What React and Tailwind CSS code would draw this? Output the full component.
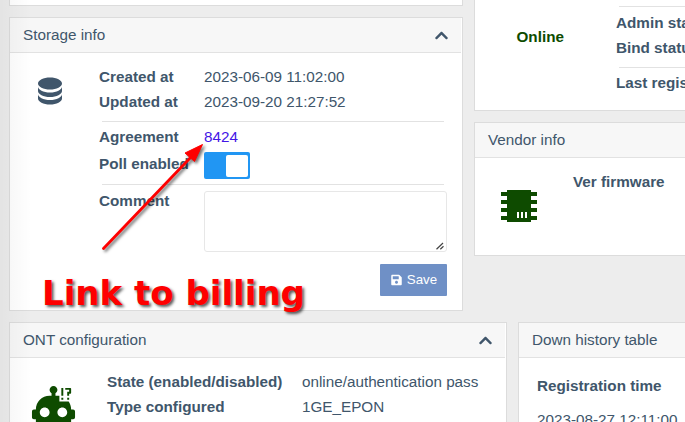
import React from "react";
import { FaChevronUp, FaSave } from "react-icons/fa";

function MdIcon({ d, className }) {
  return (
    <svg viewBox="0 0 24 24" className={className} fill="currentColor">
      <path d={d} />
    </svg>
  );
}

const DATABASE =
  "M12,3C7.58,3 4,4.79 4,7C4,9.21 7.58,11 12,11C16.42,11 20,9.21 20,7C20,4.79 16.42,3 12,3M4,9V12C4,14.21 7.58,16 12,16C16.42,16 20,14.21 20,12V9C20,11.21 16.42,13 12,13C7.58,13 4,11.21 4,9M4,14V17C4,19.21 7.58,21 12,21C16.42,21 20,19.21 20,17V14C20,16.21 16.42,18 12,18C7.58,18 4,16.21 4,14Z";
const CHIP =
  "M6,4H18V5H21V7H18V9H21V11H18V13H21V15H18V17H21V19H18V20H6V19H3V17H6V15H3V13H6V11H3V9H6V7H3V5H6V4M11,15V18H12V15H11M13,15V18H14V15H13M15,15V18H16V15H15Z";
const ROBOT =
  "M20 4H18V3H20.5C20.78 3 21 3.22 21 3.5V5.5C21 5.78 20.78 6 20.5 6H20V7H19V5H20V4M19 9H20V8H19V9M17 3H16V7H17V3M23 15V18C23 18.55 22.55 19 22 19H21V20C21 21.11 20.11 22 19 22H5C3.9 22 3 21.11 3 20V19H2C1.45 19 1 18.55 1 18V15C1 14.45 1.45 14 2 14H3C3 10.13 6.13 7 10 7H11V5.73C10.4 5.39 10 4.74 10 4C10 2.9 10.9 2 12 2S14 2.9 14 4C14 4.74 13.6 5.39 13 5.73V7H14C14.34 7 14.67 7.03 15 7.08V10H19.74C20.53 11.13 21 12.5 21 14H22C22.55 14 23 14.45 23 15M10 15.5C10 14.12 8.88 13 7.5 13S5 14.12 5 15.5 6.12 18 7.5 18 10 16.88 10 15.5M19 15.5C19 14.12 17.88 13 16.5 13S14 14.12 14 15.5 15.12 18 16.5 18 19 16.88 19 15.5M17 8H16V9H17V8Z";

function Card({ title, collapsible, className, children }) {
  return (
    <section className={"shrink-0 border border-[#dcdcdc] bg-white " + className}>
      {title && (
        <header className="mr-px flex h-[35px] items-center justify-between border-b border-[#e2e2e2] bg-[#f7f7f7] pl-[13px] pr-[13px]">
          <h2>{title}</h2>
          {collapsible && <FaChevronUp className="h-[15px] w-[13px]" />}
        </header>
      )}
      {children}
    </section>
  );
}

function Row({ label, value }) {
  return (
    <div className="flex h-[25px] leading-[25px]">
      <div className="w-[105px] shrink-0 font-bold">{label}</div>
      <div>{value}</div>
    </div>
  );
}

export default function App() {
  return (
    <div className="relative flex h-[422px] w-[685px] flex-col overflow-hidden bg-[#ededed] pl-[9px] font-['Liberation_Sans',Arial,sans-serif] text-[15.25px] text-[#40566b]">
      <div className="flex h-[322px] shrink-0 gap-[11px]">
        <div className="flex w-[454px] shrink-0 flex-col gap-[11px]">
          <Card className="h-[6px] border-t-0" />
          <Card title="Storage info" collapsible className="h-[294px]">
            <div className="flex">
              <div className="w-[89px] shrink-0 pl-[22px] pt-[20px]">
                <MdIcon d={DATABASE} className="h-9 w-9" />
              </div>
              <div className="w-[348px] pt-[11px]">
                <Row label="Created at" value="2023-06-09 11:02:00" />
                <Row label="Updated at" value="2023-09-20 21:27:52" />
                <div className="ml-[3px] mr-[3px] mt-[7px] mb-[2px] h-px bg-[#e2e2e2]" />
                <Row label="Agreement" value={<a className="text-[#4316e6]">8424</a>} />
                <div className="mt-[3px] flex h-[27px] leading-[24px]">
                  <div className="w-[105px] shrink-0 font-bold">Poll enabled</div>
                  <div className="flex h-[27px] w-[46px] items-center justify-end rounded-[2px] bg-[#2196f3] pr-[2px]">
                    <div className="h-[22px] w-[22px] rounded-[2px] bg-white" />
                  </div>
                </div>
                <div className="ml-[3px] mr-[3px] mt-[5px] h-px bg-[#e2e2e2]" />
                <div className="flex pt-[3px]">
                  <div className="w-[105px] shrink-0 font-bold leading-[25px]">Comment</div>
                  <div className="mt-[3px] flex h-[61px] w-[243px] shrink-0 items-end justify-end rounded-[3px] border border-[#e7e7e7] pb-px pr-[2px]">
                    <svg viewBox="0 0 8 8" className="h-2 w-2" stroke="#444" strokeWidth="1.2">
                      <path d="M0.5 7.2L7 1M4.3 7.2L7.5 4.3" />
                    </svg>
                  </div>
                </div>
                <div className="mt-[12px] flex justify-end">
                  <button className="flex h-8 w-[67px] items-center justify-center gap-[5px] rounded-[1px] bg-[#6f90c6] pl-px text-[13.3px] text-white">
                    <FaSave className="h-[12px] w-[11px]" />
                    <span>Save</span>
                  </button>
                </div>
              </div>
            </div>
          </Card>
        </div>
        <div className="flex w-[230px] shrink-0 flex-col gap-[11px]">
          <Card className="h-[111px] border-t-0">
            <div className="flex">
              <div className="w-[141px] shrink-0 pl-[41.5px] pt-[24px] font-bold leading-[25px] text-[#0e4b00]">Online</div>
              <div className="whitespace-nowrap pt-[6px] font-bold leading-[25px]">
                <div className="ml-[3px] mb-[3px] h-px bg-[#e2e2e2]" />
                <div>Admin status</div>
                <div>Bind status</div>
                <div className="ml-[3px] mt-[7px] mb-[2px] h-px bg-[#e2e2e2]" />
                <div>Last registration</div>
              </div>
            </div>
          </Card>
          <Card title="Vendor info" className="h-[134px]">
            <div className="flex">
              <div className="w-[98px] shrink-0 pl-[20px] pt-[24px] text-[#0e4b00]">
                <MdIcon d={CHIP} className="h-12 w-12" />
              </div>
              <div className="pt-[11px] font-bold leading-[25px]">Ver firmware</div>
            </div>
          </Card>
        </div>
      </div>

      <div className="flex h-[140px] shrink-0 gap-[11px]">
        <Card title="ONT configuration" collapsible className="w-[498px]">
          <div className="flex items-start">
            <div className="w-[97px] shrink-0 pl-[20px] pt-[24px] text-[#0e4b00]">
              <MdIcon d={ROBOT} className="h-[47px] w-[47px]" />
            </div>
            <div className="grid grid-cols-[195px_auto] whitespace-nowrap pt-[11px] leading-[25px]">
              <div className="font-bold">State (enabled/disabled)</div>
              <div>online/authentication pass</div>
              <div className="font-bold">Type configured</div>
              <div>1GE_EPON</div>
            </div>
          </div>
        </Card>
        <Card title="Down history table" className="w-[200px]">
          <div className="pl-[18px] pt-[15px] leading-[25px]">
            <div className="font-bold">Registration time</div>
            <div className="mt-[9px]">2023-08-27 12:11:00</div>
          </div>
        </Card>
      </div>

      <div className="pointer-events-none absolute inset-y-0 left-0 w-[32px] bg-gradient-to-r from-black/4 to-transparent" />
      <svg
        viewBox="0 0 140 130"
        className="absolute left-[90px] top-[135px] h-[130px] w-[140px] [filter:drop-shadow(2px_2px_1.5px_rgba(0,0,0,0.55))]"
      >
        <path d="M13.5 113.5L102 21" stroke="#fe0000" strokeWidth="2.8" strokeLinecap="round" />
        <path d="M112.5 9.5L95 18L104.500 26.500Z" fill="#fe0000" stroke="#fe0000" strokeWidth="1" strokeLinejoin="round" />
      </svg>
      <div className="absolute left-[42px] top-[273px] whitespace-nowrap font-['DejaVu_Sans',sans-serif] text-[34px] font-bold leading-[40px] text-[#fe0000] [text-shadow:2px_2px_3px_rgba(0,0,0,0.65)]">
        Link to billing
      </div>
    </div>
  );
}
